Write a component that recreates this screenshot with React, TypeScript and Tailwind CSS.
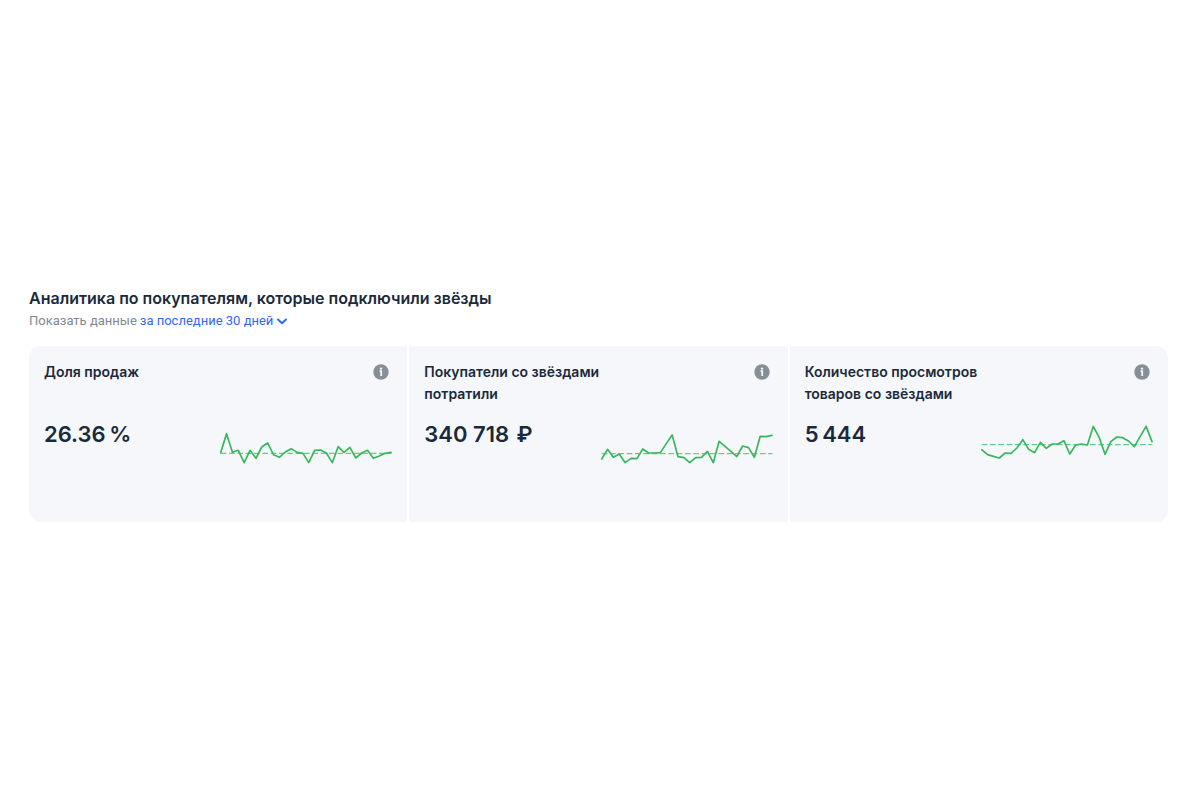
type Metric = {
  title: string
  value: string
  average: number
  points: number[]
}

// Points run top to bottom on a 516x132 canvas, one for each day
const metrics: Metric[] = [
  {
    title: 'Доля продаж',
    value: '26.36\u2009%',
    average: 91,
    points: [
      89, 32, 88, 82, 119, 82, 106, 72, 60, 95, 103, 87, 77, 88, 91, 119, 82, 81, 90, 119, 71, 88,
      73, 105, 90, 82, 106, 99, 91, 88,
    ],
  },
  {
    title: 'Покупатели со звёздами потратили',
    value: '340\u2005718\u2004₽',
    average: 92,
    points: [
      108, 79, 103, 93, 119, 106, 107, 78, 90, 90, 89, 62, 36, 101, 104, 119, 104, 103, 85, 119, 55,
      70, 85, 101, 69, 74, 103, 40, 41, 37,
    ],
  },
  {
    title: 'Количество просмотров товаров со звёздами',
    value: '5\u2009444',
    average: 65,
    points: [
      80, 95, 100, 105, 90, 91, 75, 50, 79, 89, 58, 76, 63, 63, 53, 93, 66, 63, 66, 10, 43, 94, 56,
      42, 44, 54, 71, 40, 10, 56,
    ],
  },
]

const Sparkline = ({ points, average }: { points: number[]; average: number }) => {
  const step = 511 / (points.length - 1)
  const line = points.map((y, i) => `${2 + i * step},${y}`).join(' ')

  return (
    <svg viewBox="0 0 516 132" className="w-[172px] h-11 shrink-0" fill="none" aria-hidden="true">
      <path d={`M2 ${average}H514`} stroke="#6cc98a" strokeWidth="4" strokeDasharray="17 8" />
      <polyline points={line} stroke="#37b75c" strokeWidth="5" strokeLinejoin="round" strokeLinecap="round" />
    </svg>
  )
}

const InfoIcon = () => (
  <svg viewBox="0 0 16 16" className="w-4 h-4" aria-hidden="true">
    <circle cx="8" cy="8" r="7.7" fill="#868f97" />
    <circle cx="8" cy="4.6" r="1.2" fill="#f5f7fb" />
    <path d="M6.5 7.2H8.2V12" fill="none" stroke="#f5f7fb" strokeWidth="1.8" />
  </svg>
)

const MetricCard = ({ metric }: { metric: Metric }) => {
  return (
    <article className="bg-[#f5f7fb] p-[15px] h-44">
      <div className="flex justify-between items-start min-h-11">
        <h3 className="text-sm leading-[22px] font-semibold max-w-[200px]">{metric.title}</h3>
        <button type="button" aria-label="Подробнее" className="mt-[3px] mr-[3px]">
          <InfoIcon />
        </button>
      </div>
      <div className="flex justify-between items-start mt-[13px]">
        <p className="text-[22px] leading-8 font-semibold whitespace-nowrap">{metric.value}</p>
        <div className="mt-[5px]">
          <Sparkline points={metric.points} average={metric.average} />
        </div>
      </div>
    </article>
  )
}

const App = () => {
  return (
    <main className="min-h-screen bg-white px-[29px] pt-[286px] pr-8 pb-8 text-[#1b2a3a] font-['Inter','Liberation_Sans',sans-serif]">
      <h2 className="text-base leading-6 font-semibold">
        Аналитика по покупателям, которые подключили звёзды
      </h2>
      <div className="flex items-center text-[13px] leading-[22px] [font-family:Roboto,sans-serif]">
        <label htmlFor="period" className="text-[#808790]">
          Показать данные
        </label>
        <div className="flex items-center ml-[3px] text-[#2b6bf3]">
          <select id="period" className="appearance-none bg-transparent [field-sizing:content]">
            <option>за последние 30 дней</option>
          </select>
          <svg viewBox="0 0 12 12" className="w-3 h-3 ml-[3px] pointer-events-none" aria-hidden="true">
            <path d="M2 4.5L6 8.2L10 4.5" fill="none" stroke="currentColor" strokeWidth="2" strokeLinecap="round" strokeLinejoin="round" />
          </svg>
        </div>
      </div>
      <section className="grid grid-cols-3 gap-0.5 mt-3.5 rounded-xl overflow-hidden">
        {metrics.map((metric) => (
          <MetricCard metric={metric} key={metric.title} />
        ))}
      </section>
    </main>
  )
}

export default App
